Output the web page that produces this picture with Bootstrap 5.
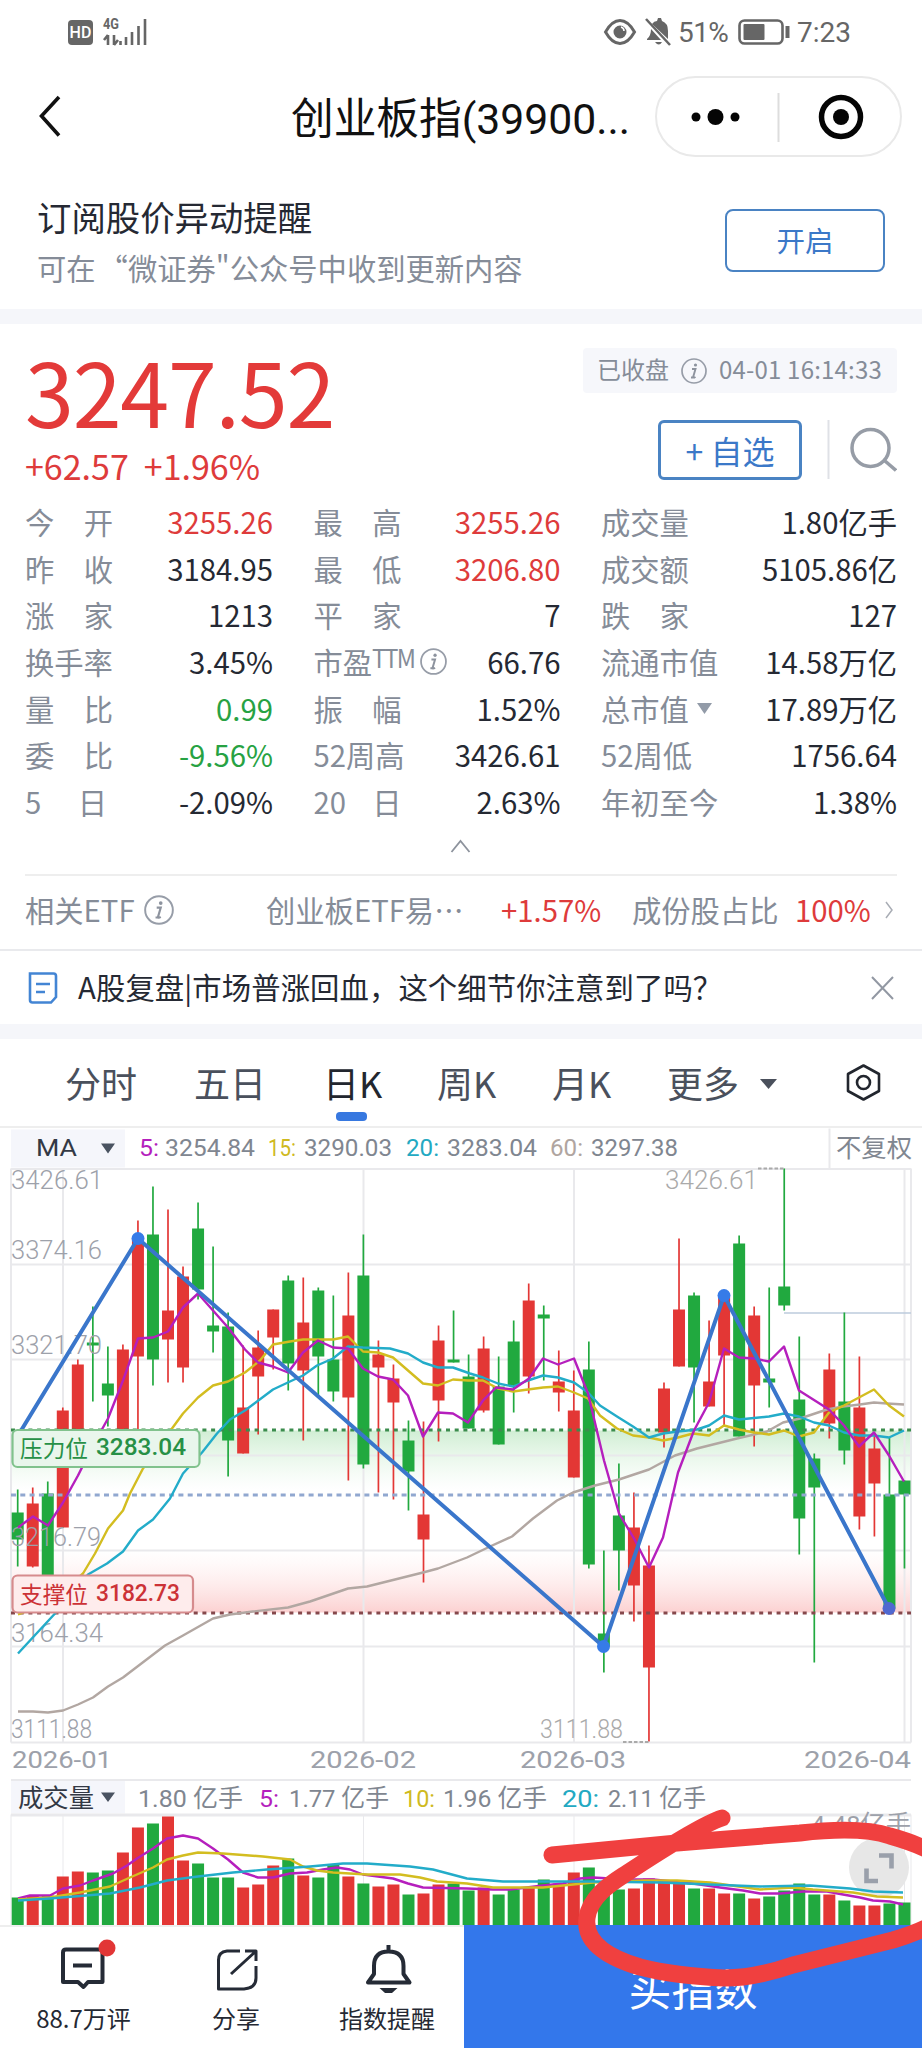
<!DOCTYPE html>
<html lang="zh-CN">
<head>
<meta charset="utf-8">
<meta name="viewport" content="width=device-width, initial-scale=1">
<title>创业板指</title>
<link href="https://cdn.jsdelivr.net/npm/bootstrap@5.3.0/dist/css/bootstrap.min.css" rel="stylesheet">
<style>
body{font-family:"Noto Sans CJK SC",sans-serif;color:#252933;background:#fff;line-height:1;overflow:hidden}
.app{width:922px;height:2048px}
svg{display:block;flex-shrink:0}
.t-gray{color:#858c98}.t-red{color:#de3b3b}.t-green{color:#27a243}.t-blue{color:#3b78c8}
.statusbar{height:62px;padding:2px 66px 0 68px;font:28px Roboto,sans-serif;color:#666}
.hd{width:25px;height:25px;border-radius:4px;background:#666;color:#fff;font:500 16px/25px Roboto,sans-serif}
.navhead{height:110px;display:grid;grid-template-columns:37px 254px 364px 247px;align-items:center;padding-bottom:2px}
.navhead .ttl{font-size:42.7px;color:#111;line-height:60px;padding-top:1px}
.ttl span{font-family:Roboto,sans-serif}
.capsule{height:81px;border:2px solid #e9e9e9;border-radius:41px}
.subscribe{height:137px;padding:0 37px 0 37px}
.sub1{font-size:34.4px;line-height:40px;margin-top:24px}
.sub2{font-size:29.3px;line-height:34px;margin-top:14px;white-space:nowrap}
.btn-line{border:2px solid #4a83c3;border-radius:8px;color:#3b78c8;padding:0;background:#fff}
.btn-open{width:160px;height:63px;font-size:28.5px;margin-top:37px}
.band{height:15px;background:#f5f6fa}
.quote{height:177px;padding:0 25px}
.price{font-size:88px;line-height:88px;margin-top:22px;color:#e33a39;letter-spacing:-1.2px}
.chg{font-size:34px;line-height:40px;margin-top:12px}
.tagtime{height:45px;width:314px;margin-top:24px;background:#f6f7fb;border-radius:4px;font-size:24px;padding:0 15px 3px 14px;white-space:nowrap}
.tagtime span:last-child{letter-spacing:.2px}
.btn-add{width:144px;height:60px;font-size:32px;border-width:3px;border-radius:6px}
.stats{display:grid;grid-template-columns:248px 247px 296px;column-gap:40.5px;grid-auto-rows:46.65px;padding:0 25px;font-size:29.3px;white-space:nowrap}
.stats>div{padding-bottom:5px}
.lab3{display:flex;justify-content:space-between;width:88px;color:#858c98}
.ttm{font:25.5px/24px "Noto Sans CJK SC",sans-serif;margin-top:-9px;letter-spacing:-2px;transform:scaleX(.93);transform-origin:left}
.etf{height:75px;margin:0 25px;border-top:2px solid #eee;display:grid;grid-template-columns:119px 122px 235px 131px 163px 90px 12px;align-items:center;font-size:29.3px;white-space:nowrap;color:#858c98;padding-bottom:5px}
.news{height:76px;border-top:2px solid #e9eaed;font-size:29.35px;padding:0 27px 0 28px}
.news span{margin-left:20px;margin-top:-2px;letter-spacing:.1px}
.tabs{height:89px;display:grid;grid-template-columns:65px 129px 129px 114px 115px 115px 93px 84px 1fr;align-items:center;font-size:36px;color:#4a505c;border-bottom:2px solid #eee;white-space:nowrap}
.tabs .cur{color:#22262e;position:relative}
.tabs .cur::after{content:"";position:absolute;left:13px;top:48px;width:31px;height:9px;border-radius:4px;background:#3778e0}
.bottombar{height:123px}
.tool{width:464px;font-size:24px;border-top:2px solid #eee}
.tool-labels{grid-template-columns:167px 138px 164px;line-height:38px}
.buy{width:458px;background:#3377eb;color:#fff;font-size:43px;padding-top:3px}
.scribble{left:0;top:1790px;pointer-events:none}
.chart text{font-family:Roboto,"Noto Sans CJK SC",sans-serif}
</style>
</head>
<body>
<main class="app position-relative overflow-hidden">
  <div class="statusbar d-flex align-items-center">
    <div class="hd text-center">HD</div>
    <svg class="ms-2" width="46" height="30" viewBox="100 16 46 30"><text x="102" y="28" font-size="14" font-weight="700" fill="#666" font-family="Roboto" textLength="16" lengthAdjust="spacingAndGlyphs">4G</text>
      <path d="M107 34v10M107 34l-4 5M113 34v10M113 44l4-5M119.500 40v4M125 36v8M131 31v13M137.500 25v19M144 18v26" stroke="#666" stroke-width="2.600" fill="none"/></svg>
    <svg class="ms-auto" width="68" height="30" viewBox="604 16 68 30"><g fill="none" stroke="#666" stroke-width="3"><path d="M606.500 31Q613 19.500 621 19.500Q629 19.500 635.500 31Q629 42.500 621 42.500Q613 42.500 606.500 31Z"/><circle cx="621" cy="31" r="5" fill="#666"/></g><path d="M622 26a4 4 0 0 1 3 4" stroke="#fff" stroke-width="1.500" fill="none"/>
      <path d="M648 38q4-3 4-10l10 11h-14zM653 23q2-3 5-3l1-3h3l1 3q6 2 6 10v8zM656 41h7q-3 5-7 0z" fill="#666"/><path d="M647 18l24 26" stroke="#666" stroke-width="2.500"/></svg>
    <span style="margin-left:7px;width:58px;letter-spacing:-.6px">51%</span>
    <svg width="54" height="30" viewBox="736 16 54 30"><rect x="739.500" y="19.500" width="43" height="23" rx="5" fill="none" stroke="#666" stroke-width="2.600"/><rect x="743.500" y="23" width="21" height="16" rx="1" fill="#666"/><path d="M787.500 25v12" stroke="#666" stroke-width="4"/></svg>
    <span style="margin-left:7px;width:59px">7:23</span>
  </div>

  <header class="navhead">
    <span></span>
    <svg width="24" height="44" viewBox="36 94 24 44"><path d="M58 97L40.500 116L58 135.500" fill="none" stroke="#111" stroke-width="3.600"/></svg>
    <div class="ttl text-nowrap">创业板指<span>(39900...</span></div>
    <div class="capsule d-flex align-items-center">
      <svg width="243" height="77" viewBox="657 77 243 77"><g fill="#050505"><circle cx="696" cy="116" r="4.500"/><circle cx="715.500" cy="116" r="8"/><circle cx="735" cy="116" r="4.500"/><circle cx="841" cy="116" r="8"/></g><path d="M778.500 92v49" stroke="#ddd" stroke-width="2"/><circle cx="841" cy="116" r="19.500" fill="none" stroke="#050505" stroke-width="5.500"/></svg>
    </div>
  </header>

  <section class="subscribe d-flex justify-content-between">
    <div><div class="sub1">订阅股价异动提醒</div><div class="sub2 t-gray">可在<span style="margin-left:3px">“微证券"公众号中收到更新内容</span></div></div>
    <button class="btn btn-line btn-open">开启</button>
  </section>
  <div class="band"></div>

  <section class="quote d-flex justify-content-between">
    <div><div class="price">3247.52</div><div class="chg t-red"><span>+62.57</span><span style="margin-left:15px">+1.96%</span></div></div>
    <div>
      <div class="tagtime t-gray d-flex align-items-center justify-content-between"><span>已收盘</span>
        <svg class="mt-1" width="26" height="26" viewBox="0 0 26 26"><use href="#info"/></svg><span>04-01 16:14:33</span></div>
      <div class="d-flex justify-content-end align-items-center" style="margin-top:27px">
        <button class="btn btn-line btn-add">+ 自选</button>
        <svg width="95" height="60" viewBox="802 420 95 60"><path d="M828.500 420v59" stroke="#dfe1e6" stroke-width="2"/><circle cx="870.500" cy="448" r="18.500" fill="none" stroke="#969ca6" stroke-width="3.500"/><path d="M885 461L896 470.500" stroke="#969ca6" stroke-width="3.500"/></svg>
      </div>
    </div>
  </section>

  <section class="stats" id="stats"></section>
  <svg width="922" height="46.45" viewBox="0 827 922 46.45"><path d="M451.500 852L460.500 841L469.500 852" stroke="#8d939d" stroke-width="1.800" fill="none"/></svg>

  <div class="etf"><span>相关ETF</span><svg width="30" height="30" viewBox="0 0 26 26"><use href="#info"/></svg><span>创业板ETF易⋯</span><span class="t-red">+1.57%</span><span>成份股占比</span><span class="t-red">100%</span>
    <svg width="10" height="20" viewBox="0 0 10 20"><path d="M1 2L7 10L1 18" fill="none" stroke="#a9adb5" stroke-width="1.500"/></svg></div>
  <div class="news d-flex align-items-center">
    <svg width="30" height="32" viewBox="28 971 30 32"><path d="M30 972.500H53.500Q56 972.500 56 975V996L51 1001.500H32.500Q30 1001.500 30 999ZM36 983h14M36 991h9" fill="none" stroke="#4385d4" stroke-width="2.600"/></svg>
    <span>A股复盘|市场普涨回血，这个细节你注意到了吗？</span>
    <svg class="ms-auto" width="24" height="24" viewBox="0 0 24 24"><path d="M1 1L22 23M22 1L1 23" stroke="#9298a3" stroke-width="2"/></svg>
  </div>
  <div class="band" style="margin-top:-1px"></div>

  <nav class="tabs"><i></i><span>分时</span><span>五日</span><span class="cur">日K</span><span>周K</span><span>月K</span><span>更多</span>
    <svg width="18" height="14" viewBox="0 0 18 14"><path d="M0 4h17L8.500 14z" fill="#4a505c"/></svg>
    <svg width="38" height="40" viewBox="844 1062 38 40"><path d="M863.500 1065.500L879 1074V1091L863.500 1099.500L848 1091V1074Z" fill="none" stroke="#22262e" stroke-width="2.600" stroke-linejoin="round"/><circle cx="863.500" cy="1082.500" r="6.500" fill="none" stroke="#22262e" stroke-width="2.600"/></svg>
  </nav>

  <svg class="chart" id="chart" width="922" height="797" viewBox="0 1127.500 922 797">
    <defs>
      <symbol id="info" viewBox="0 0 26 26"><circle cx="13" cy="13" r="12" fill="none" stroke="#979da8" stroke-width="1.700"/><path d="M11 11h3.500l-2.500 8.500q1 .5 2.500-.5M10 19.500h4" fill="none" stroke="#8d939e" stroke-width="1.900"/><circle cx="14.500" cy="7" r="1.600" fill="#8d939e"/></symbol>
      <linearGradient id="gg" x1="0" y1="0" x2="0" y2="1"><stop stop-color="#c8ebcc" stop-opacity=".85"/><stop offset="1" stop-color="#dff5e2" stop-opacity="0"/></linearGradient>
      <linearGradient id="gr" x1="0" y1="0" x2="0" y2="1"><stop stop-color="#ffe6e6" stop-opacity="0"/><stop offset="1" stop-color="#fbc9c9" stop-opacity=".85"/></linearGradient>
    </defs>
    <rect x="11" y="1129" width="114" height="38" fill="#f5f6fb"/>
    <rect x="11" y="1780" width="114" height="33" fill="#f5f6fb"/>
    <path d="M101 1143h14l-7 10zM101 1792h14l-7 9.500z" fill="#4a5361"/>
    <g id="heads"></g>
    <rect x="11" y="1430" width="900" height="60" fill="url(#gg)"/>
    <rect x="11" y="1550" width="900" height="62" fill="url(#gr)"/>
    <g stroke="#e9e9ec" stroke-width="2" fill="none">
      <path d="M829.500 1128v40M11 1168.500H911M11 1264H911M11 1359H911M11 1455H911M11 1550H911M11 1646H911M11 1742H911M11 1168V1742M63 1168V1742M363.500 1168V1742M574 1168V1742M904.500 1168V1742M911 1168V1742M11 1779.500H911"/>
      <path d="M11 1814.500H911" stroke-width="3"/><path d="M11 1814V1925M63 1814V1925M363.500 1814V1925M574 1814V1925M904.500 1814V1925M911 1814V1925" stroke-width="1"/>
    </g>
    <path d="M784 1312.500H911" stroke="#bccbdd" stroke-width="1.500"/>
    <g id="candles"></g>
    <g id="axis"></g>
    <g fill="none" stroke-width="3" stroke-dasharray="4 4.700"><path d="M11 1429.500H911" stroke="#3c8d4e"/><path d="M11 1494.500H911" stroke="#91a8d0" stroke-dasharray="5 4.300"/><path d="M11 1612.500H911" stroke="#86484c"/></g>
    <path d="M758 1168h26M623 1741.500h26" stroke="#aaa" stroke-width="2" stroke-dasharray="3.500 2"/>
    <g id="mas" fill="none" stroke-width="2.400" stroke-linejoin="round"></g>
    <path d="M15 1440L138 1238L603.500 1646L724 1295L889 1608" fill="none" stroke="#3a76cb" stroke-width="4"/>
    <g fill="#367be8"><circle cx="138" cy="1238" r="6.500"/><circle cx="603.500" cy="1646" r="6.500"/><circle cx="724" cy="1295" r="6.500"/><circle cx="889" cy="1608" r="6.500" fill="#5068d0"/></g>
    <rect x="12.500" y="1429.500" width="187" height="37" rx="5" fill="#e9f6ec" stroke="#81c28d" stroke-width="2.200"/>
    <rect x="12.500" y="1575" width="180.500" height="37" rx="5" fill="#feecec" stroke="#d68b8d" stroke-width="2.200"/>
    <g id="levels"></g>
    <circle cx="879" cy="1867" r="30" fill="#e7e7e7"/><path d="M879 1855H891.500V1868M866.500 1868V1880.500H878" fill="none" stroke="#9aa0ab" stroke-width="4.600"/>
    <g id="volmas" fill="none" stroke-width="2.400" stroke-linejoin="round"></g>
  </svg>

  <footer class="bottombar d-flex">
    <div class="tool">
      <svg width="464" height="72" viewBox="0 1927 464 72"><g fill="none" stroke="#252b36" stroke-width="4" stroke-linejoin="round">
        <path d="M66 1949.500H100Q102.500 1949.500 102.500 1952V1982H88L83.500 1987L78 1982H63V1952.500Q63 1949.500 66 1949.500ZM73 1965.500H92"/>
        <path d="M240 1951H227Q218.500 1952 218.500 1960V1989H244Q256 1988 256 1978V1966M245 1951H256V1961M231 1974L255 1952" stroke-width="3"/>
        <path d="M388.500 1945V1951M374 1966Q374 1951.500 388.500 1951.500Q403.500 1951.500 403.500 1966V1974L409.500 1982.500H368L374 1974Z"/></g>
        <path d="M379.500 1988H397.500L392 1993H385Z" fill="#252b36"/><circle cx="107" cy="1948" r="8.500" fill="#e23636"/></svg>
      <div class="tool-labels d-grid text-center"><span>88.7万评</span><span>分享</span><span>指数提醒</span></div>
    </div>
    <div class="buy d-flex align-items-center justify-content-center">买指数</div>
  </footer>

  <svg class="scribble position-absolute" width="922" height="258" viewBox="0 1790 922 258"><path d="M552 1855L677 1843L800 1833Q860 1826 890 1836Q975 1860 960 1900Q945 1925 893 1940L793 1965Q755 1978 725 1978Q675 1976 640 1967Q583 1950 587 1918C590 1895 615 1881 627 1873Q700 1825 722 1818" fill="none" stroke="#f0403f" stroke-width="17" stroke-linecap="round" stroke-linejoin="round"/></svg>
</main>
<script src="https://cdn.jsdelivr.net/npm/bootstrap@5.3.0/dist/js/bootstrap.bundle.min.js"></script>
<script>
const info='<svg width="27" height="27" viewBox="0 0 26 26" style="margin-left:3px"><use href="#info"/></svg>';
const stats=[['今|开','3255.26','red'],['最|高','3255.26','red'],['成交量','1.80亿手'],['昨|收','3184.95'],['最|低','3206.80','red'],['成交额','5105.86亿'],['涨|家','1213'],['平|家','7'],['跌|家','127'],['换手率','3.45%'],['TTM','66.76'],['流通市值','14.58万亿'],['量|比','0.99','green'],['振|幅','1.52%'],['CAP','17.89万亿'],['委|比','-9.56%','green'],['52周高','3426.61'],['52周低','1756.64'],['5|日','-2.09%'],['20|日','2.63%'],['年初至今','1.38%']];
document.getElementById('stats').innerHTML=stats.map(([l,v,c])=>{
  let lab=`<span class="t-gray">${l}</span>`;
  if(l.includes('|'))lab=`<span class="lab3"${l[0]=='5'?' style="width:82px"':''}>${l.split('|').map(s=>`<span>${s}</span>`).join('')}</span>`;
  if(l=='TTM')lab=`<span class="t-gray d-flex align-items-center">市盈<span class="ttm">TTM</span>${info}</span>`;
  if(l=='CAP')lab='<span class="t-gray d-flex align-items-center">总市值<svg width="15" height="11" style="margin-left:8px" viewBox="0 0 15 11"><path d="M0 0h15L7.500 11z" fill="#929ba8"/></svg></span>';
  return `<div class="d-flex justify-content-between align-items-center">${lab}<span class="${c?'t-'+c:''}">${v}</span></div>`}).join('');

const R='#e33735',G='#21a93f',put=(id,s)=>document.getElementById(id).innerHTML=s;
const X=i=>17.7+i*15.03;
// direction, high, body top, body bottom, low, volume top
const k=`G 1489 1512 1539 1566 1897
R 1487 1503 1566 1567 1895
G 1481 1493 1575 1575 1895
R 1407 1410 1527 1527 1876
R 1359 1364 1450 1450 1871
G 1306 1342 1345 1401 1872
G 1346 1383 1395 1426 1870
R 1344 1349 1440 1440 1852
R 1220 1238 1356 1430 1827
G 1186 1234 1359 1385 1823
R 1209 1310 1339 1382 1816
R 1266 1276 1367 1382 1860
G 1202 1228 1289 1299 1863
G 1246 1325 1331 1352 1877
G 1312 1326 1440 1476 1877
R 1345 1407 1453 1453 1887
R 1330 1347 1376 1434 1884
R 1309 1309 1337 1369 1865
G 1275 1280 1363 1390 1858
R 1277 1322 1370 1440 1875
G 1287 1290 1356 1397 1877
G 1295 1359 1391 1401 1864
R 1272 1315 1397 1480 1876
G 1234 1275 1464 1468 1883
R 1340 1354 1367 1492 1886
R 1364 1378 1402 1499 1884
G 1420 1440 1471 1510 1894
R 1421 1514 1539 1582 1893
R 1325 1340 1400 1441 1884
G 1310 1359 1362 1362 1883
G 1354 1376 1428 1428 1890
R 1336 1348 1410 1412 1887
G 1356 1386 1444 1444 1894
G 1320 1341 1385 1412 1889
R 1283 1300 1376 1393 1887
G 1305 1314 1318 1380 1879
R 1350 1381 1392 1411 1883
R 1370 1410 1477 1477 1872
G 1341 1369 1564 1568 1867
G 1550 1633 1646 1672 1884
G 1463 1515 1550 1590 1889
R 1492 1527 1585 1621 1888
R 1545 1565 1667 1741 1878
R 1382 1388 1432 1447 1880
R 1238 1309 1366 1366 1882
G 1292 1295 1367 1422 1888
R 1320 1381 1406 1406 1888
R 1296 1297 1355 1426 1893
G 1235 1243 1436 1436 1893
R 1306 1315 1385 1446 1898
G 1287 1378 1382 1407 1896
G 1168 1286 1305 1310 1890
G 1336 1399 1518 1554 1883
G 1453 1458 1487 1662 1894
R 1353 1369 1423 1438 1894
G 1312 1401 1450 1464 1900
R 1356 1407 1516 1529 1905
R 1435 1448 1483 1536 1905
G 1437 1494 1608 1608 1903
G 1480 1480 1494 1568 1902`.split('\n').map(r=>r.split(' '));
put('candles',k.map(([d,h,t,b,l,v],i)=>{const c=d=='R'?R:G,x=X(i);
 return `<path d="M${x} ${h}V${l}" stroke="${c}" stroke-width="1.700"/><rect x="${x-6}" y="${t}" width="12" height="${b-t}" fill="${c}"/><rect x="${x-6}" y="${v}" width="12" height="${1925-v}" fill="${c}"/>`}).join(''));

// moving averages: four of the price, then three of the volume
const lines=[
['#b2a7a2','18,1711 33,1711 48,1712 63,1710 78,1704 93,1697 108,1686 123,1677 165,1645 183,1635 213,1618 230,1614 253,1611 288,1607 310,1601 348,1588 367,1586 423,1572 438,1568 467,1557 490,1546 512,1536 533,1518 557,1500 573,1492 595,1485 619,1479 649,1469 675,1455 697,1448 737,1438 767,1431 783,1422 800,1418 827,1409 843,1406 860,1404 874,1402 887,1403 904,1404'],
['#d3bd20','18,1614 50,1602 83,1573 95,1553 108,1528 123,1510 130,1493 143,1468 172,1428 183,1413 198,1397 213,1385 228,1381 245,1372 260,1360 273,1344 290,1341 303,1339 333,1339 348,1336 363,1351 378,1352 393,1357 408,1370 423,1383 438,1385 453,1379 468,1380 483,1380 498,1388 513,1391 543,1387 558,1386 574,1392 588,1398 600,1415 617,1428 633,1435 649,1437 663,1440 678,1437 693,1433 709,1435 724,1425 739,1429 754,1432 769,1434 784,1430 799,1436 814,1432 829,1412 844,1405 859,1397 874,1389 889,1405 904,1416'],
['#23acc9','18,1653 55,1613 88,1574 107,1563 123,1551 138,1530 153,1519 170,1498 183,1473 202,1452 217,1433 230,1419 245,1410 273,1389 290,1381 303,1375 317,1365 333,1358 348,1346 363,1347 390,1348 408,1353 423,1362 438,1367 453,1367 470,1373 483,1377 498,1383 513,1386 528,1380 543,1375 558,1377 574,1382 588,1392 600,1405 617,1416 633,1426 649,1437 663,1433 678,1431 697,1429 709,1425 724,1415 739,1419 769,1416 784,1413 799,1416 814,1422 829,1425 844,1432 859,1435 874,1435 889,1437 904,1430'],
['#b51fbd','18,1527 33,1516 48,1525 63,1502 78,1475 93,1445 108,1418 123,1380 138,1338 153,1337 168,1331 183,1307 198,1293 228,1327 245,1349 258,1362 273,1366 288,1372 303,1352 318,1340 333,1347 348,1348 363,1368 378,1376 393,1379 408,1395 423,1436 438,1412 453,1413 468,1422 483,1400 496,1387 513,1389 529,1378 543,1358 558,1364 574,1358 588,1393 604,1460 619,1513 634,1538 649,1567 663,1537 678,1472 694,1430 709,1402 724,1348 739,1357 754,1358 769,1361 784,1346 799,1390 829,1409 844,1425 859,1446 874,1432 889,1455 904,1481'],
['#b51fbd','18,1898 30,1895 50,1895 63,1888 80,1885 93,1880 113,1873 127,1865 137,1858 153,1848 167,1838 183,1835 198,1838 213,1848 228,1859 243,1872 258,1877 273,1877 290,1873 307,1872 323,1869 337,1867 350,1869 363,1874 393,1878 408,1883 423,1887 467,1888 493,1889 510,1889 543,1885 563,1883 580,1878 593,1877 627,1879 653,1879 693,1883 720,1887 743,1890 760,1893 780,1893 803,1891 827,1891 843,1894 860,1897 873,1900 890,1901 903,1904'],
['#d3bd20','18,1899 50,1897 80,1892 110,1886 130,1877 153,1867 167,1859 183,1855 198,1852 223,1853 263,1856 290,1859 303,1866 317,1870 333,1872 367,1874 400,1874 420,1877 437,1881 467,1883 493,1887 543,1887 593,1882 643,1880 677,1880 710,1882 760,1889 793,1887 813,1889 853,1892 877,1896 903,1897'],
['#23acc9','18,1900 50,1898 110,1893 140,1887 167,1880 198,1876 233,1872 267,1869 310,1866 343,1863 367,1863 410,1866 433,1869 467,1878 503,1881 547,1881 593,1881 660,1882 710,1884 760,1886 810,1885 850,1888 873,1891 903,1892']].map(([c,p])=>`<polyline stroke="${c}" points="${p}"/>`);
put('mas',lines.slice(0,4).join(''));
put('volmas',lines.slice(4).join(''));

const T=(s,x,y,w,c,f=24.5,wt=400)=>`<text x="${x}" y="${y}" textLength="${w}" lengthAdjust="spacingAndGlyphs" fill="${c}" font-size="${f}" font-weight="${wt}">${s}</text>`;
const g='#808690',m='#b51fbd',y='#cfba1f',c='#23a9c2',n='#b0a5a0',d='#333945';
put('heads',[['MA',36,1155.5,41,d],['5:',139,1155.5,20,m],['3254.84',165,1155.5,90,g],['15:',268,1155.5,28,y],['3290.03',304,1155.5,88,g],['20:',406,1155.5,33,c],['3283.04',447,1155.5,90,g],['60:',550,1155.5,33,n],['3297.38',591,1155.5,87,g],['不复权',836,1156,76,g,25.5],
['成交量',18,1806,76,d,25],['1.80 亿手',138,1806,105,g],['5:',259,1806,20,m],['1.77 亿手',289,1806,100,g],['10:',403,1806,32,y],['1.96 亿手',443,1806,104,g],['20:',562,1806,37,c],['2.11 亿手',608,1806,98,g]].map(a=>T(...a)).join(''));
const a='#9da1aa';
put('axis',[['3426.61',11,1188.5,92,a,25.5,300],['3374.16',11,1258.5,91,a,25.5,300],['3321.70',11,1353.5,91,a,25.5,300],['3216.79',11,1545.5,90,a,25.5,300],['3164.34',11,1641.5,92,a,25.5,300],['3111.88',11,1737.5,81,a,25.5,300],['3426.61',665,1188.5,93,'#aaa',25.5,300],['3111.88',540,1737.5,83,'#aaa',25.5,300],
['2026-01',12,1767.5,100,a],['2026-02',310,1767.5,106,a],['2026-03',520,1767.5,106,a],['2026-04',804,1767.5,107,a],['4.48亿手',811,1832,100,a]].map(q=>T(...q)).join(''));
put('levels',T('压力位',20,1456,68,'#279046',23)+T('3283.04',96,1454.5,90,'#279046',23,500)+T('支撑位',20,1602,68,'#cc3236',23)+T('3182.73',96,1600.5,84,'#cc3236',23,500));
</script>
</body>
</html>
